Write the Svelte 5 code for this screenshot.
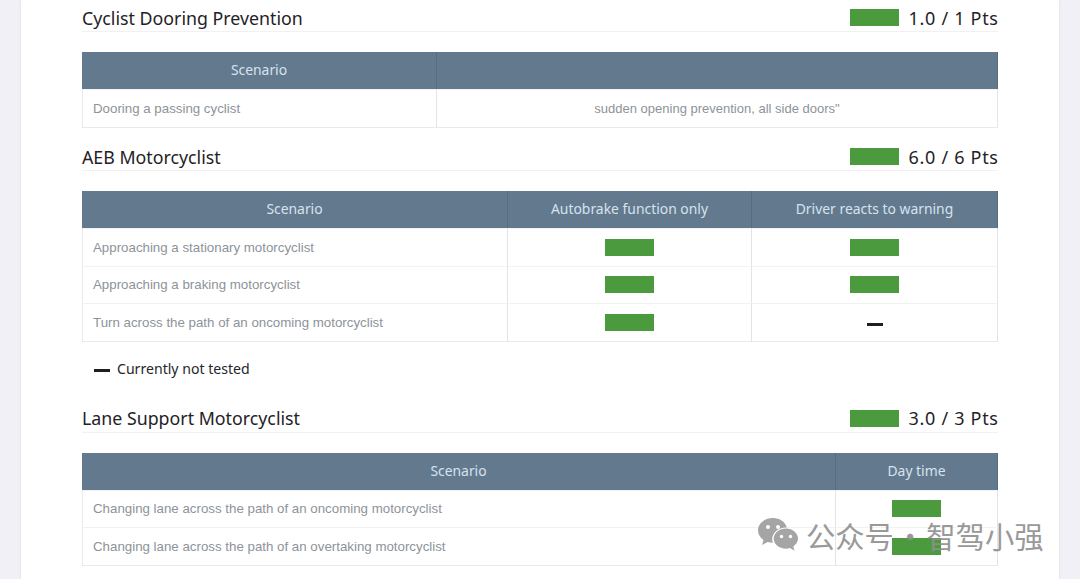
<script>
  const sections = [
    { title: 'Cyclist Dooring Prevention', pts: '1.0 / 1 Pts', cols: 'c-a', head: ['Scenario', ''],
      rows: [['Dooring a passing cyclist', 'sudden opening prevention, all side doors"']] },
    { title: 'AEB Motorcyclist', pts: '6.0 / 6 Pts', cols: 'c-b', head: ['Scenario', 'Autobrake function only', 'Driver reacts to warning'],
      rows: [
        ['Approaching a stationary motorcyclist', 'bar', 'bar'],
        ['Approaching a braking motorcyclist', 'bar', 'bar'],
        ['Turn across the path of an oncoming motorcyclist', 'bar', 'dash']
      ], legend: true },
    { title: 'Lane Support Motorcyclist', pts: '3.0 / 3 Pts', cols: 'c-c', head: ['Scenario', 'Day time'],
      rows: [
        ['Changing lane across the path of an oncoming motorcyclist', 'bar'],
        ['Changing lane across the path of an overtaking motorcyclist', 'bar']
      ] }
  ];
</script>

<div class="page">
  <main class="card">
    {#each sections as s}
      <section class="section">
        <header class="title-row">
          <h2>{s.title}</h2>
          <div class="score"><span class="bar"></span><span class="pts">{s.pts}</span></div>
        </header>
        <div class="table {s.cols}">
          {#each s.head as h}<div class="th">{h}</div>{/each}
          {#each s.rows as r}
            {#each r as c, i}
              <div class="td" class:first={i === 0} class:mid={i > 0}>
                {#if c === 'bar'}<span class="bar"></span>
                {:else if c === 'dash'}<span class="dash cell-dash"></span>
                {:else}{c}{/if}
              </div>
            {/each}
          {/each}
        </div>
        {#if s.legend}
          <div class="legend"><span class="dash"></span><span>Currently not tested</span></div>
        {/if}
      </section>
    {/each}
  </main>

  <div class="watermark">
    <svg width="42" height="36" viewBox="0 0 42 36" aria-hidden="true">
      <path d="M16 1C7.5 1 1 6.6 1 13.4c0 3.9 2.1 7.2 5.5 9.5L5 28l5.6-3c1.6.5 3.4.8 5.2.8-.4-1.200-.6-2.400-.6-3.600 0-6.500 6.100-11.700 13.600-11.700h1C28.500 5 22.800 1 16 1z" fill="#9c9c9c"/>
      <circle cx="11" cy="10" r="2" fill="#fff"/>
      <circle cx="21" cy="10" r="2" fill="#fff"/>
      <path d="M29 11.500c-6.800 0-12.300 4.500-12.300 10.100S22.200 31.700 29 31.700c1.400 0 2.800-.2 4-.6l4.500 2.600-1.200-4.200c2.800-1.900 4.700-4.700 4.700-7.900 0-5.600-5.500-10.100-12-10.100z" fill="#9c9c9c"/>
      <circle cx="24.500" cy="19.500" r="1.700" fill="#fff"/>
      <circle cx="33.500" cy="19.500" r="1.700" fill="#fff"/>
    </svg>
    <span class="mark-text">公众号 · 智驾小强</span>
  </div>
</div>

<style>
  :global(body) {
    margin: 0;
    background: #f0f0f6;
  }
  .page {
    position: relative;
    width: 1080px;
    height: 579px;
    overflow: hidden;
    background: #f0f0f6;
  }
  .card {
    width: 916px;
    height: 579px;
    margin-left: 21px;
    padding: 0 61px;
    background: #fff;
    box-shadow: 0 0 3px rgba(0, 0, 0, 0.08);
    display: flex;
    flex-direction: column;
    gap: 11.500px;
    box-sizing: content-box;
  }
  .section {
    display: flex;
    flex-direction: column;
  }
  .title-row {
    height: 32px;
    padding-top: 4px;
    margin-bottom: 20px;
    border-bottom: 1px solid #f1f1f1;
    display: flex;
    align-items: center;
    justify-content: space-between;
    box-sizing: border-box;
    color: #1f2226;
    font-family: "Noto Sans", sans-serif;
    font-size: 17.800px;
  }
  h2 {
    margin: 0;
    font-size: inherit;
    font-weight: 400;
  }
  .score {
    display: flex;
    align-items: center;
    gap: 10px;
  }
  .pts {
    font-size: 18px;
    letter-spacing: 0.7px;
    margin-right: -0.7px;
  }
  .bar {
    display: block;
    width: 49px;
    height: 17px;
    background: #4c9a3e;
  }
  .table {
    display: grid;
    border-bottom: 1px solid #e8eaec;
    font-family: "Liberation Sans", sans-serif;
  }
  .c-a { grid-template-columns: 355px 561px; }
  .c-b { grid-template-columns: 426px 244px 246px; }
  .c-c { grid-template-columns: 754px 162px; }
  .th {
    height: 37px;
    padding-bottom: 2px;
    background: #63798e;
    color: #d5e3ee;
    font-family: "Noto Sans", sans-serif;
    font-size: 13.900px;
    display: flex;
    align-items: center;
    justify-content: center;
    border-right: 1px solid #566c81;
    box-sizing: border-box;
  }
  .th:last-of-type {
    border-right: 0;
  }
  .td {
    height: 37.500px;
    display: flex;
    align-items: center;
    box-sizing: border-box;
    color: #8d9399;
    font-size: 13.300px;
    border-top: 1px solid #f0f2f3;
    border-right: 1px solid #e2e5e8;
  }
  .td.first {
    padding-left: 10px;
    border-left: 1px solid #e8eaec;
  }
  .td.mid {
    justify-content: center;
    font-size: 13px;
  }
  .dash {
    display: block;
    width: 16px;
    height: 3px;
    background: #1d1f22;
  }
  .cell-dash {
    margin-top: 5px;
  }
  .legend {
    display: flex;
    align-items: center;
    gap: 7px;
    height: 47.500px;
    padding: 6px 0 0 12px;
    box-sizing: border-box;
    color: #24272b;
    font-family: "Noto Sans", sans-serif;
    font-size: 14.100px;
  }
  .legend .dash {
    margin-top: 5px;
  }
  .watermark {
    position: absolute;
    left: 757px;
    top: 514px;
    display: flex;
    align-items: center;
    gap: 7px;
    color: #8f8f8f;
    font-family: "Noto Sans CJK SC", sans-serif;
    font-size: 29.300px;
    opacity: 0.9;
  }
  .mark-text {
    word-spacing: -5px;
  }
</style>
